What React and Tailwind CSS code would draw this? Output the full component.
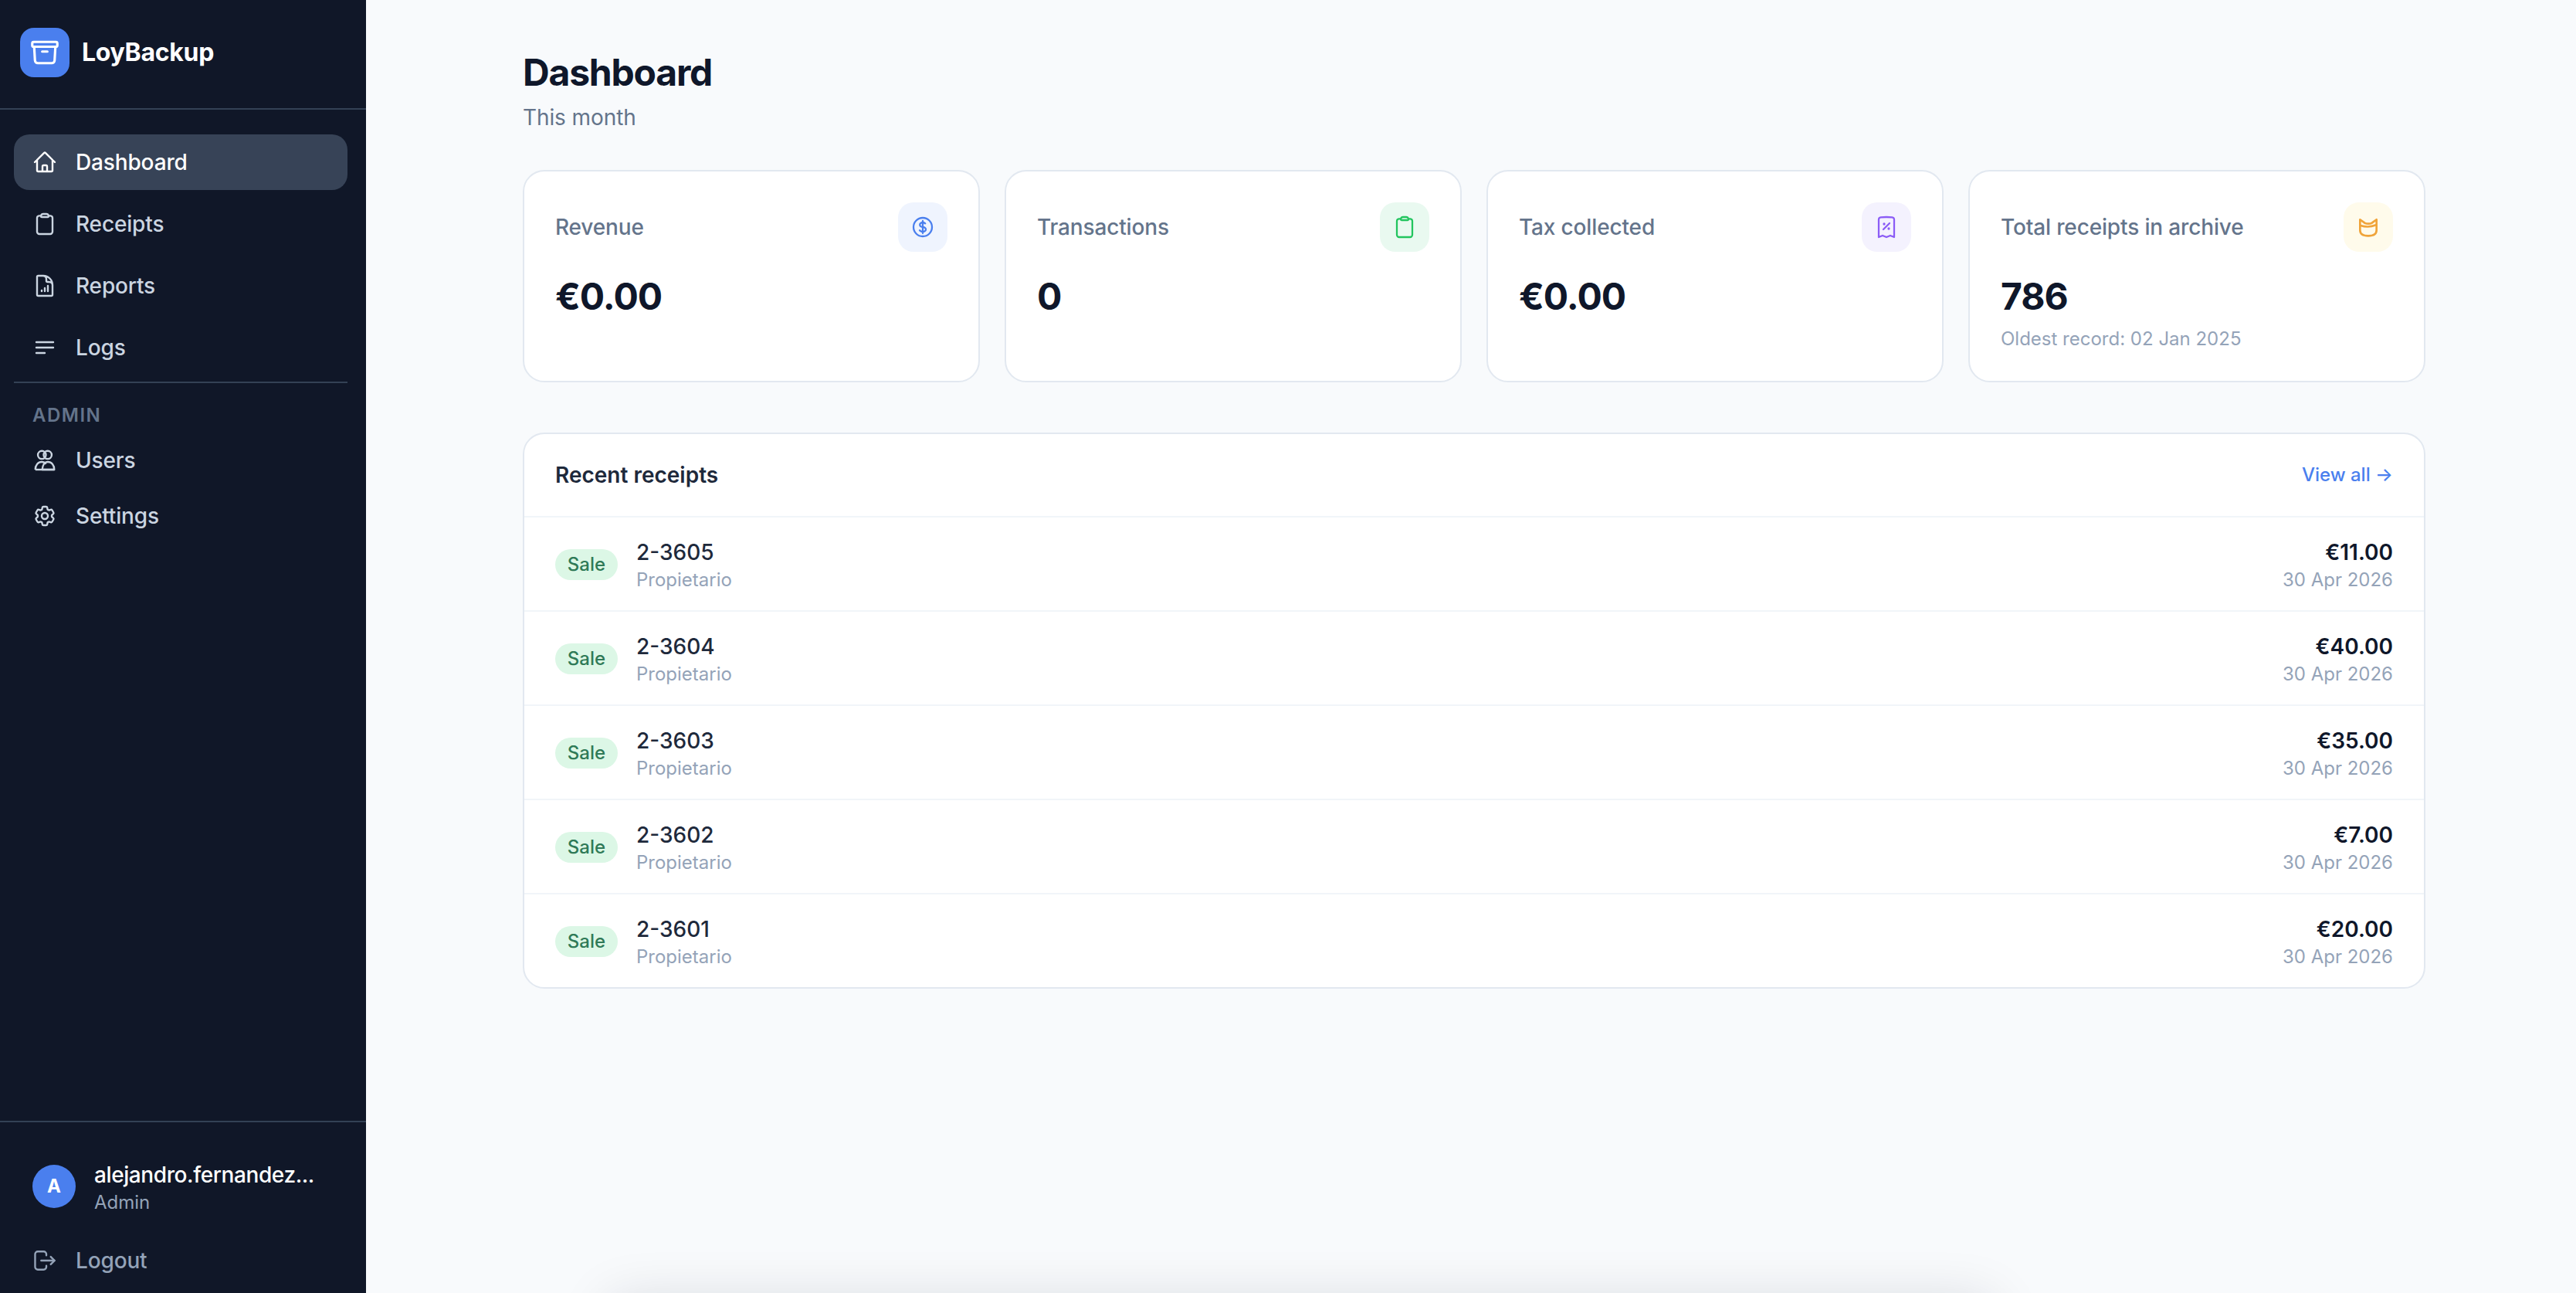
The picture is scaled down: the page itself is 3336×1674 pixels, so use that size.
import React from "react";
import {
  HiOutlineArchiveBox,
  HiOutlineBars3BottomLeft,
  HiOutlineClipboard,
  HiOutlineCog6Tooth,
  HiOutlineCurrencyDollar,
  HiOutlineDocumentChartBar,
  HiOutlineHome,
  HiOutlineReceiptPercent,
} from "react-icons/hi2";

const UsersIcon = ({ className }) => (
  <svg viewBox="0 0 24 24" fill="none" stroke="currentColor" strokeWidth="1.8" strokeLinejoin="round" className={className}>
    <circle cx="9.2" cy="6.7" r="3.9" />
    <circle cx="14.8" cy="6.7" r="3.9" />
    <path d="M2.8 21c0-4.5 2.800-7.500 6.200-7.500 1.800 0 3.200.8 4.200 2" />
    <path d="M9.500 21c.3-4.500 2.500-7.500 5.500-7.500 3.500 0 6.200 3 6.200 7.500z" />
    <path d="M2.800 21h18.400" />
  </svg>
);

const LogoutIcon = ({ className }) => (
  <svg viewBox="0 0 24 24" fill="none" stroke="currentColor" strokeWidth="1.8" strokeLinecap="round" strokeLinejoin="round" className={className}>
    <path d="M13.500 7V5.800a2.600 2.600 0 0 0-2.600-2.600H5.200a2.600 2.600 0 0 0-2.600 2.600v12.400a2.600 2.600 0 0 0 2.600 2.600h5.700a2.600 2.600 0 0 0 2.600-2.600V17" />
    <path d="M8.500 12h12.800" />
    <path d="M17.800 8.300 21.500 12l-3.700 3.700" />
  </svg>
);

const ArchiveCatIcon = ({ className }) => (
  <svg viewBox="0 0 24 24" fill="none" stroke="currentColor" strokeWidth="2" strokeLinejoin="round" strokeLinecap="round" className={className}>
    <path d="M4 4.700 8.500 8q3.500 1.500 7 0L20 4.700V15q0 5.500-8 5.500T4 15z" />
    <path d="M4.500 10.500q7.500 2.500 15-.5" />
  </svg>
);

const mainNav = [
  { label: "Dashboard", icon: HiOutlineHome, active: true },
  { label: "Receipts", icon: HiOutlineClipboard },
  { label: "Reports", icon: HiOutlineDocumentChartBar },
  { label: "Logs", icon: HiOutlineBars3BottomLeft },
];

const adminNav = [
  { label: "Users", icon: UsersIcon },
  { label: "Settings", icon: HiOutlineCog6Tooth },
];

const stats = [
  { label: "Revenue", value: "€0.00", icon: HiOutlineCurrencyDollar, accent: "bg-[#eff4fe] text-[#4a7fee]" },
  { label: "Transactions", value: "0", icon: HiOutlineClipboard, accent: "bg-[#e9f9f0] text-[#22c55e]" },
  { label: "Tax collected", value: "€0.00", icon: HiOutlineReceiptPercent, accent: "bg-[#f4f2fe] text-[#8b5cf6]" },
  {
    label: "Total receipts in archive",
    value: "786",
    note: "Oldest record: 02 Jan 2025",
    icon: ArchiveCatIcon,
    accent: "bg-[#fffbeb] text-[#f0a43a]",
  },
];

const receipts = [
  { id: "2-3605", amount: "€11.00" },
  { id: "2-3604", amount: "€40.00" },
  { id: "2-3603", amount: "€35.00" },
  { id: "2-3602", amount: "€7.00" },
  { id: "2-3601", amount: "€20.00" },
];

const NavItem = ({ label, icon: Icon, active }) => (
  <a
    href="#"
    className={`flex h-[72px] items-center gap-[24px] rounded-[20px] px-[24px] text-[28px] font-medium tracking-[-0.15px] ${
      active ? "bg-[#374357] text-white" : "text-[#cbd5e1]"
    }`}
  >
    <Icon className="h-[32px] w-[32px] shrink-0" strokeWidth="1.8" />
    {label}
  </a>
);

const StatCard = ({ label, value, note, icon: Icon, accent }) => (
  <div className="h-[275px] rounded-[28px] border-2 border-[#e2e8f0] bg-white p-[40px]">
    <div className="flex items-center justify-between">
      <span className="text-[28px] font-medium leading-[40px] tracking-[-0.15px] text-[#64748b]">{label}</span>
      <div className={`flex h-[64px] w-[64px] items-center justify-center rounded-[20px] ${accent}`}>
        <Icon className="h-[32px] w-[32px]" strokeWidth="1.7" />
      </div>
    </div>
    <div className="mt-[28px] text-[48px] font-bold leading-[60px] tracking-[-1px] text-[#0f172a]">{value}</div>
    {note && <div className="mt-[9px] text-[24px] leading-[32px] text-[#94a3b8]">{note}</div>}
  </div>
);

const ReceiptRow = ({ id, amount }) => (
  <div className="flex h-[122px] items-center justify-between border-t-2 border-[#f1f5f9] px-[40px]">
    <div className="flex items-center gap-[24px]">
      <span className="mt-[2px] flex h-[40px] w-[81px] items-center justify-center rounded-full bg-[#dcf7e6] text-[24px] font-medium text-[#2f7a57]">
        Sale
      </span>
      <div className="pt-[6px]">
        <div className="text-[28px] font-medium leading-[36px] text-[#1e293b]">{id}</div>
        <div className="text-[24px] leading-[36px] text-[#94a3b8]">Propietario</div>
      </div>
    </div>
    <div className="pt-[6px] text-right">
      <div className="text-[28px] font-semibold leading-[36px] text-[#0f172a]">{amount}</div>
      <div className="text-[24px] leading-[36px] text-[#94a3b8]">30 Apr 2026</div>
    </div>
  </div>
);

export default function App() {
  return (
    <div className="relative flex h-[1674px] w-[3336px] overflow-hidden bg-[#f8fafc] font-['Inter',sans-serif] antialiased">
      <aside className="flex w-[474px] shrink-0 flex-col bg-[#101728]">
        <div className="flex h-[142px] items-center gap-[16px] border-b-2 border-[#334155] px-[26px] pb-[4px]">
          <div className="flex h-[64px] w-[64px] items-center justify-center rounded-[18px] bg-[#4a7fee] text-white">
            <HiOutlineArchiveBox className="h-[40px] w-[40px]" strokeWidth="1.9" />
          </div>
          <span className="text-[32px] font-bold tracking-[-0.3px] text-white">LoyBackup</span>
        </div>

        <nav className="flex flex-1 flex-col pl-[18px] pr-[24px] pt-[32px]">
          <div className="flex flex-col gap-[8px]">
            {mainNav.map((item) => (
              <NavItem key={item.label} {...item} />
            ))}
          </div>
          <div className="mt-[8px] border-t-2 border-[#334155] pt-[26px]">
            <div className="px-[24px] text-[24px] font-semibold leading-[32px] tracking-[1.5px] text-[#64748b]">
              ADMIN
            </div>
            <div className="mt-[6px] flex flex-col">
              {adminNav.map((item) => (
                <NavItem key={item.label} {...item} />
              ))}
            </div>
          </div>
        </nav>

        <div className="border-t-2 border-[#334155] px-[18px] pb-[6px] pt-[50px]">
          <div className="flex items-start gap-[24px] px-[24px]">
            <div className="mt-[5px] flex h-[56px] w-[56px] items-center justify-center rounded-full bg-[#4a7fee] text-[24px] font-bold text-white">
              A
            </div>
            <div className="min-w-0">
              <div className="whitespace-nowrap text-[28px] font-medium leading-[36px] tracking-[-0.4px] text-white">
                alejandro.fernandez...
              </div>
              <div className="text-[24px] leading-[36px] text-[#94a3b8]">Admin</div>
            </div>
          </div>
          <a href="#" className="mt-[21px] flex h-[72px] items-center gap-[24px] px-[24px] text-[28px] font-medium tracking-[-0.15px] text-[#94a3b8]">
            <LogoutIcon className="h-[32px] w-[32px]" />
            Logout
          </a>
        </div>
      </aside>

      <main className="ml-[203px] w-[2464px] pt-[62px]">
        <h1 className="text-[48px] font-bold leading-[64px] tracking-[-1.2px] text-[#0f172a]">Dashboard</h1>
        <p className="mt-[6px] text-[28px] leading-[40px] tracking-[-0.1px] text-[#64748b]">This month</p>

        <div className="mt-[48px] grid grid-cols-4 gap-[32px]">
          {stats.map((stat) => (
            <StatCard key={stat.label} {...stat} />
          ))}
        </div>

        <section className="mt-[65px] overflow-hidden rounded-[28px] border-2 border-[#e2e8f0] bg-white">
          <div className="flex h-[106px] items-center justify-between px-[40px]">
            <h2 className="text-[28px] font-semibold text-[#1e293b]">Recent receipts</h2>
            <a href="#" className="text-[24px] font-medium text-[#4a7fee]">View all →</a>
          </div>
          {receipts.map((r) => (
            <ReceiptRow key={r.id} {...r} />
          ))}
        </section>
      </main>

      <div className="absolute left-[800px] top-[1695px] h-[60px] w-[1770px] shadow-[0_0_70px_10px_rgba(15,23,42,0.14)]" />
    </div>
  );
}
